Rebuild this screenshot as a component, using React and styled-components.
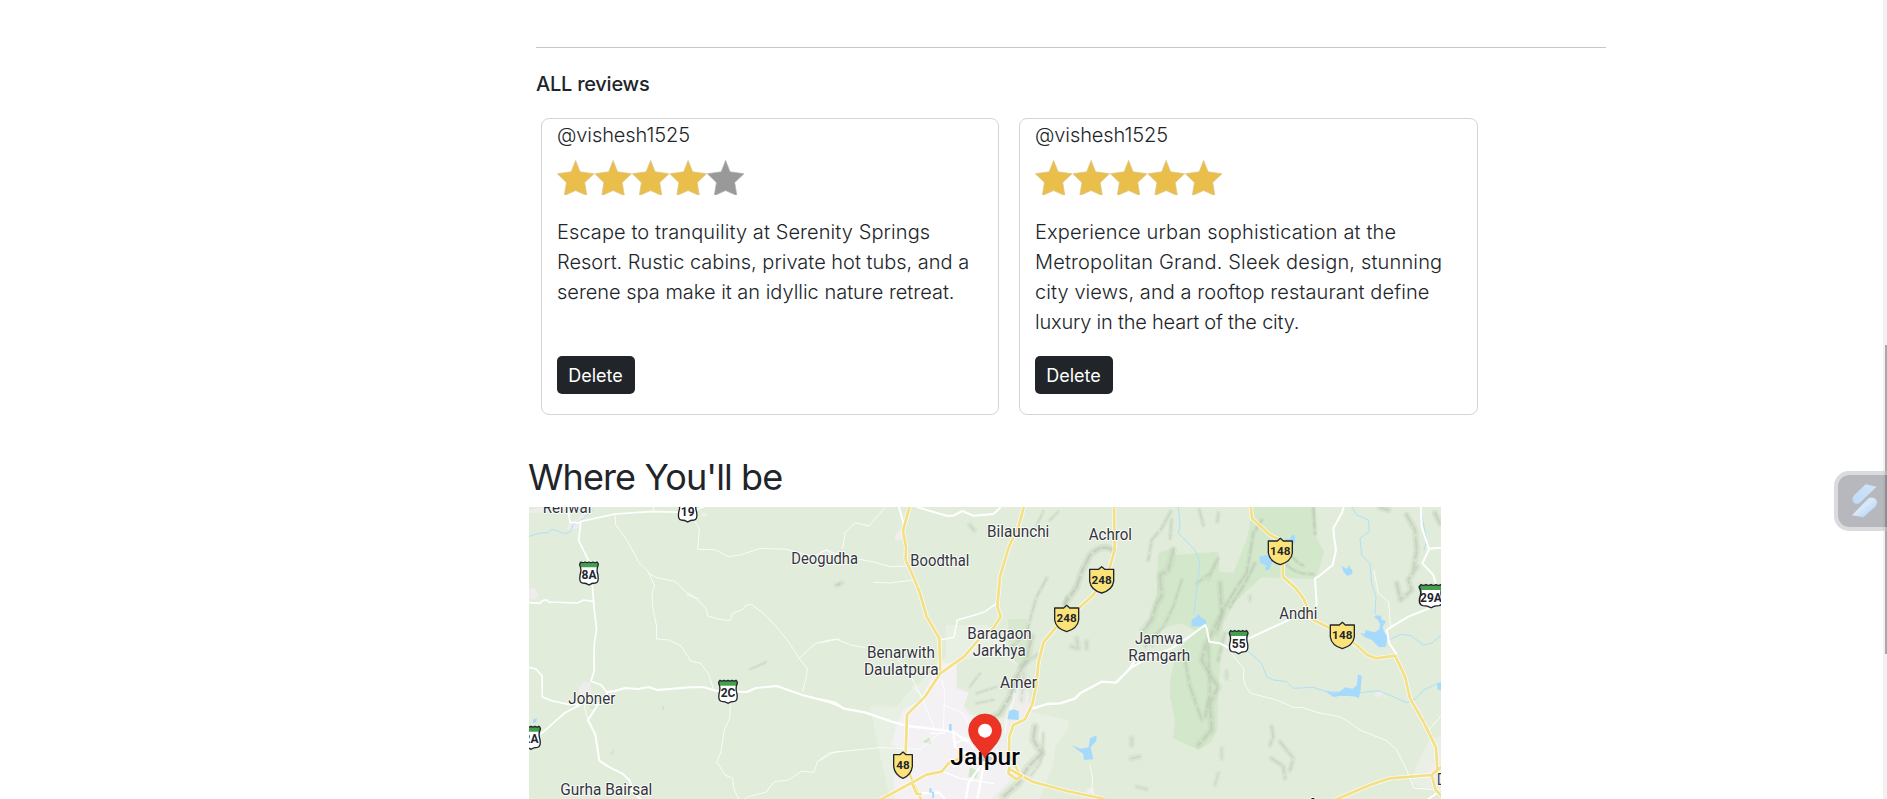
import React from 'react';
import styled, { createGlobalStyle } from 'styled-components';

const GlobalStyle = createGlobalStyle`
  *, *::before, *::after { box-sizing: border-box; }
  html, body { margin: 0; padding: 0; overflow: hidden; }
  body {
    background: #fff;
    color: #212529;
    font-family: Inter, "Open Sans", sans-serif;
    font-size: 20px;
    font-weight: 300;
    line-height: 30px;
  }
`;

const Page = styled.main`
  height: 799px;
  overflow: hidden;
  padding: 47px 0 0 529px;
`;

const Reviews = styled.section`
  width: 1077px;
  padding-left: 7px;
`;

const Divider = styled.hr`
  height: 1px;
  margin: 0 0 24px;
  border: 0;
  background: #c8c8ca;
`;

const SectionTitle = styled.h4`
  margin: 0 0 22px;
  font-size: 20px;
  font-weight: 500;
  line-height: 24px;
  letter-spacing: -0.25px;
`;

const CardRow = styled.div`
  display: grid;
  grid-template-columns: 458px 459px;
  gap: 20px;
  padding-left: 5px;
`;

const Card = styled.article`
  display: flex;
  flex-direction: column;
  align-items: flex-start;
  height: 297px;
  padding: 1px 15px 20px;
  border: 1px solid #d3d4d5;
  border-radius: 8px;
`;

const Author = styled.h5`
  margin: 0 0 7px;
  font-size: 20px;
  font-weight: 300;
  line-height: 30px;
  letter-spacing: -0.1px;
`;

const Stars = styled.svg`
  display: block;
  width: 188px;
  height: 38px;
`;

const Comment = styled.p`
  margin: 22px 0 0;
`;

const CommentLine = styled.span`
  display: block;
  white-space: nowrap;
  letter-spacing: ${(p) => p.$tracking}px;
`;

const DeleteButton = styled.button`
  width: 78px;
  height: 38px;
  margin-top: auto;
  padding: 1px 1px 0 0;
  border: 0;
  border-radius: 5px;
  background: #212529;
  color: #fff;
  font-family: inherit;
  font-size: 18px;
  font-weight: 400;
  line-height: 37px;
`;

const Location = styled.section`
  width: 912px;
  margin-top: 40px;
`;

const LocationTitle = styled.h2`
  margin: 0 0 8px -1px;
  font-size: 36px;
  font-weight: 400;
  line-height: 44px;
  letter-spacing: -0.9px;
  white-space: nowrap;
`;

const MapCanvas = styled.svg`
  display: block;
  width: 912px;
  height: 292px;
  font-family: Roboto, sans-serif;
`;

const ScrollTrack = styled.div`
  position: fixed;
  top: 0;
  right: 0;
  bottom: 0;
  width: 4px;
  background: #f1f1f1;
`;

const ScrollThumb = styled.div`
  width: 2px;
  height: 309px;
  margin: 345px 0 0 2px;
  background: #a8a8a8;
`;

const FloatingTab = styled.aside`
  position: fixed;
  top: 471px;
  right: 0;
  width: 53px;
  height: 60px;
  display: flex;
  align-items: center;
  padding-left: 14px;
  border: 4px solid rgba(190, 193, 201, 0.58);
  border-right: 0;
  border-radius: 15px 0 0 15px;
  background: rgba(112, 113, 124, 0.5);
  background-clip: padding-box;
`;

const STAR = 'M18.6 0.4 L23.1 11.8 L37 13.7 L27.7 22.6 L29.9 35.6 L18.6 30.6 L7.3 35.6 L9.4 22.6 L0.4 13.7 L14.2 11.8 Z';

function Rating({ value }) {
  return (
    <Stars viewBox="0 0 188 38" role="img" aria-label={`${value} stars`}>
      {[0, 1, 2, 3, 4].map((i) => (
        <path
          key={i}
          d={STAR}
          transform={`translate(${i * 37.5} 3)`}
          fill={i < value ? '#eabe4a' : '#999'}
          stroke={i < value ? '#d9c489' : '#b0b0b0'}
          strokeWidth="0.7"
        />
      ))}
    </Stars>
  );
}

const reviews = [
  {
    author: '@vishesh1525',
    rating: 4,
    lines: [
      ['Escape to tranquility at Serenity Springs', 0.085],
      ['Resort. Rustic cabins, private hot tubs, and a', -0.01],
      ['serene spa make it an idyllic nature retreat.', -0.01],
    ],
  },
  {
    author: '@vishesh1525',
    rating: 5,
    lines: [
      ['Experience urban sophistication at the', 0.15],
      ['Metropolitan Grand. Sleek design, stunning', 0.16],
      ['city views, and a rooftop restaurant define', 0.08],
      ['luxury in the heart of the city.', -0.22],
    ],
  },
];

function Label({ x, y, w, size = 47, weight = 400, children }) {
  return (
    <text
      x={x}
      y={y}
      textLength={w}
      lengthAdjust="spacingAndGlyphs"
      fontSize={size}
      fontWeight={weight}
      fill={weight > 400 ? '#050505' : '#33343c'}
      stroke="#fff"
      strokeOpacity="0.85"
      strokeWidth="6"
      strokeLinejoin="round"
      paintOrder="stroke"
    >
      {children}
    </text>
  );
}

const STATE = 'M-28 -25 Q-29 -30 -24 -34 Q-18 -30 -12 -34 Q-6 -30 0 -34 Q6 -30 12 -34 Q18 -30 24 -34 Q29 -30 28 -25 Q21 -12 27 6 Q30 28 19 29 Q8 29 0 35 Q-8 29 -19 29 Q-30 28 -27 6 Q-21 -12 -28 -25 Z';

function StateShield({ x, y, wide = 1, children }) {
  return (
    <g transform={`translate(${x} ${y})`}>
      <g transform={`scale(${wide} 1)`}>
        <path d={STATE} fill="#fff" />
        <path d="M-28 -25 Q-29 -30 -24 -34 Q-18 -30 -12 -34 Q-6 -30 0 -34 Q6 -30 12 -34 Q18 -30 24 -34 Q29 -30 28 -25 L25 -18 H-25 Z" fill="#45a04d" />
        <path d={STATE} fill="none" stroke="#22252e" strokeWidth="4" />
      </g>
      <text y="17" textAnchor="middle" fontSize="36" fontWeight="700" fill="#22252e">{children}</text>
    </g>
  );
}

function NationalShield({ x, y, half = 36, children }) {
  return (
    <g transform={`translate(${x} ${y})`}>
      <path
        d={`M${-half} -32 H-9 L0 -40 L9 -32 H${half} V4 Q${half - 4} 30 0 39 Q${4 - half} 30 ${-half} 4 Z`}
        fill="#fbe378"
        stroke="#22252e"
        strokeWidth="4"
        strokeLinejoin="round"
      />
      <text y="11" textAnchor="middle" fontSize="35" fontWeight="700" letterSpacing="0.5" fill="#22252e">{children}</text>
    </g>
  );
}

const Road = ({ d, w = 5, o = 1 }) => (
  <path d={d} fill="none" stroke="#fff" strokeWidth={w} strokeOpacity={o} strokeLinejoin="round" strokeLinecap="round" />
);

const Highway = ({ d }) => (
  <>
    <path d={d} fill="none" stroke="#fff" strokeOpacity="0.75" strokeWidth="13" strokeLinejoin="round" />
    <path d={d} fill="none" stroke="#f4df83" strokeWidth="8" strokeLinejoin="round" />
  </>
);

const Stream = ({ d }) => <path d={d} fill="none" stroke="#aee0f8" strokeWidth="3" strokeLinejoin="round" />;

const Ridge = ({ d, w = 12, o = 0.5 }) => (
  <g fill="none" strokeLinejoin="round" strokeLinecap="round" filter="url(#relief)">
    <path d={d} stroke="#bccab2" strokeWidth={w * 1.7} strokeOpacity={o * 0.45} />
    <path d={d} stroke="#b4c2aa" strokeWidth={w * 0.6} strokeOpacity={o * 0.75} strokeDasharray="34 9 18 14" />
  </g>
);

function WestTerrain() {
  return (
    <g transform="translate(520 440) scale(0.333333)">
      <g fill="#efecec">
        <path d="M27 210 L68 202 L72 218 L27 218 Z" />
        <path d="M142 262 L146 250 L172 240 L180 225 L205 208 L200 228 L180 252 L172 266 L142 270 Z" />
        <path d="M172 765 L178 740 L192 726 L212 728 L214 770 Z" />
        <path d="M27 444 L48 448 L54 468 L42 480 L27 474 Z" />
        <path d="M543 218 L558 218 L562 229 L545 231 Z" />
      </g>
      <g fill="#d3dec9">
        <path d="M686 686 L742 660 L738 672 L688 692 Z" />
        <path d="M270 944 L282 928 L281 940 Z" />
        <path d="M427 799 h5 v10 h-4z M210 800 h16 v5 h-16z M948 436 l12 -9 v9z" />
      </g>
      <path d="M39 839 L50 834 L49 847 L39 850 Z" fill="#a6dafd" />
      <Stream d="M27 290 Q60 275 84 279 Q92 264 112 272 Q128 284 150 277 L160 252 L188 237 L220 208" />
      <g fill="none">
        <Road w={3} o={0.8} d="M285 225 L287 254 L320 300 L348 350 L354 364 L385 395 L404 438 L396 458 L399 505 L410 560 L409 597 L445 600 L484 618 L512 663 L542 670 L566 703 L581 750 M385 400 L410 413 L465 424 L500 458 L518 466 L558 505 L563 528 L600 538 L630 542 L638 520 L670 508 L676 497 L694 493 L730 520 L768 560 L802 600 L838 655 L862 686 L860 706 L848 754 M838 655 L870 625 L888 610 L930 600 L960 597" />
        <Road w={3} o={0.8} d="M525 245 L538 266 L533 328 L585 329 L625 350 L660 345 L722 325 L800 328 L880 350 L918 329 L938 345 L960 352 M631 795 L629 835 L613 870 L602 940 L590 965 L616 1006 L637 1014 L643 1050 L658 1080 M668 1080 L685 1070 L740 1056 L752 1037 L765 1025 L806 1020 L844 994 L882 997 L892 965 L925 940 L960 934 M200 780 L193 800 L204 838 M400 200 V216 M500 465 L535 475" />
        <Road d="M180 245 L285 222 L400 214 L505 218 L552 200 M144 208 L150 247 L182 248 L176 302 L210 370 L216 420 L222 503 L230 568 L223 610 L222 660 L223 690 L213 724 L243 734 L262 758 L260 775 M27 488 L60 490 L68 481 L80 480 L85 486 L172 489 L192 480 L222 485 M27 682 L48 687 L66 708 L67 771 L98 783 L145 793 L185 793 L135 818 L64 881" />
        <Road w={6} d="M260 756 L285 753 L315 744 L355 747 L385 741 L412 750 L512 742 L552 742 L590 753 L680 756 L708 744 L770 738 L850 766 L930 787 L962 800" />
        <Road w={6} d="M236 790 L204 840 L226 884 L238 962 L270 983 L306 1000 L330 1022 L337 1055 L365 1080" />
      </g>
    </g>
  );
}

function CentreTerrain() {
  return (
    <g transform="translate(820 500) scale(0.333333)">
      <g fill="#e8efe3">
        <path d="M378 375 L500 375 L565 440 L610 480 L618 520 L625 590 L630 635 L745 660 L745 690 L705 740 L700 795 L660 897 L210 897 L175 745 L150 618 L230 620 L280 560 L330 520 L350 485 L378 475 Z" />
      </g>
      <path d="M410 480 L540 470 L600 500 L605 590 L560 650 L520 655 L455 640 L432 615 L446 578 L410 560 Z" fill="#e1ecdb" />
      <path d="M565 357 L620 357 L635 400 L618 480 L600 500 L575 470 L565 430 Z" fill="#d7e8cf" />
      <path d="M355 490 L410 490 L410 568 L446 578 L430 620 L450 645 L520 660 L545 690 L530 740 L565 790 L570 840 L515 897 L225 897 L220 830 L248 790 L250 750 L215 735 L228 680 L250 628 L300 600 L330 540 Z" fill="#f3f1f4" />
      <path d="M545 690 L560 630 L590 560 L628 580 L628 640 L590 668 L565 700 L562 770 L530 740 Z" fill="#eeeeea" />
      <path d="M225 108 L240 88 L250 96 L246 120 L226 122 Z M606 595 L625 600 L628 650 L600 655 Z M800 865 L822 865 L822 880 L800 880 Z" fill="#f1eded" />
      <path d="M308 725 L328 712 L334 730 L320 730 Z M445 830 L468 835 L475 815 L450 802 Z" fill="#cfe9c8" />
      <Ridge d="M880 150 Q845 130 810 165 L785 215 L770 260 L735 312" w={13} o={0.65} />
      <Ridge d="M680 235 L650 290 L635 340 L620 400 L575 440 M740 290 L735 312" w={8} />
      <Ridge d="M635 410 L620 480 L590 530 L570 590 L540 640 L500 665" w={14} o={0.6} />
      <Ridge d="M600 500 L650 465 M612 520 L605 600 M600 535 L560 560" w={12} o={0.35} />
      <Ridge d="M645 680 L640 720 L665 760 L625 800 L595 850 L550 890" w={15} o={0.6} />
      <Ridge d="M670 700 L668 760 L660 790 L630 830" w={9} o={0.4} />
      <Ridge d="M650 75 L670 35 M690 60 L715 35 M470 580 L530 560 M470 610 L520 600 M450 560 L480 520" w={7} o={0.4} />
      <Ridge d="M755 440 L775 445 M770 415 L775 445 M800 425 L800 445 M935 715 L935 735 M935 775 L958 770 M450 75 L462 90 M50 255 L64 250" w={12} o={0.4} />
      <Road w={3} o={0.8} d="M195 22 L160 62 L148 78 L105 68 L75 98 L68 145 M0 160 L20 150 L45 160 L120 178 L160 186 L210 200 L262 198 M160 247 L210 249 L278 240 M0 428 L50 418 L95 436 L135 442 M235 480 L262 510 L300 580 L345 690 M280 560 L310 595" />
      <Road w={4} d="M360 420 L402 412 L412 360 L465 345 L495 335 L530 310" />
      <Road w={3} d="M365 540 L374 575 L370 690 M370 614 L430 640 L460 700 M585 565 L580 605 L560 660 L555 700 M0 782 L40 757 L180 743 L240 745 L300 748 L370 690 M810 795 L818 835 L815 875 L830 897" o={0.8} />
      <Road w={6} d="M293 22 L380 47 L400 47 L427 33 L460 47 L520 42 L540 24 M235 15 L252 75" />
      <Road w={7} d="M0 598 L45 608 L72 626 L135 637 L215 665 L265 678 L400 695 L440 725 M400 695 L405 740 L450 770 M490 800 L472 897 M480 800 L445 850 L438 897 M300 880 L358 878 L375 897" />
      <Road w={4} d="M405 730 L440 715 L460 745 M400 800 L440 780 M370 815 L420 835 L520 850 M415 705 L450 720 M330 700 L375 700" />
      <Road w={7} d="M640 625 L680 612 L720 610 L765 596 L780 580 L845 545 L888 548 L930 505 L945 480" />
      <Highway d="M270 15 L249 92 L258 140 L257 180 L280 230 L300 280 L320 350 L358 415 L361 520" />
      <Highway d="M613 15 L596 78 L565 145 L540 230 L532 320 L542 350 L520 385 L475 420 L432 470 L361 520 L315 590 L261 644 L256 790 L280 850 L303 897" />
      <Highway d="M882 15 L884 150 L867 210 L820 285 L765 335 L710 380 L670 428 L655 490 L650 550 L637 612 L615 658 L580 675 L568 710 L567 760 L600 825 L640 846 L740 873 L855 897" />
      <Highway d="M180 900 L320 824 L365 815 L385 790 L435 768 M568 800 L565 820 L590 838 L606 828 L570 808 M276 850 L290 882 L305 882" />
      <g fill="#a6dafd">
        <path d="M567 633 L582 628 L596 634 L596 660 L562 658 Z M387 672 H395 V692 H387 Z" />
        <path d="M754 735 L782 746 L806 742 L810 715 L830 706 L829 722 L812 742 L820 778 L792 780 L790 762 L776 752 Z" />
        <path d="M328 865 H335 V875 H342 V895 H337 V878 H328 Z M583 565 H586 V578 H583 Z" />
      </g>
    </g>
  );
}

function EastTerrain() {
  return (
    <g transform="translate(1130 500) scale(0.333333)">
      <g fill="#d3e7cb">
        <path d="M370 20 L555 20 L560 115 L582 155 L565 215 L555 237 L395 232 L315 305 L280 370 L265 560 L262 690 L245 725 L205 750 L130 715 L135 660 L120 590 L122 530 L140 455 L200 395 L155 370 L95 385 L70 445 L25 425 L60 350 L80 280 L85 160 L135 140 L135 165 L265 155 L268 215 L310 218 L350 120 Z" />
      </g>
      <path d="M935 705 L895 725 L862 790 L845 845 L875 868 L935 870 Z" fill="#e9efe4" />
      <path d="M895 800 L912 792 L925 810 L915 825 L892 818 Z M730 585 L750 573 L763 580 L745 592 Z M763 592 l8 -4 v10z" fill="#f1eded" />
      <Ridge d="M122 35 L95 85 L65 120 L55 180 M125 60 L120 115 M208 30 L220 75 M265 40 L262 65" w={9} o={0.45} />
      <Ridge d="M130 150 L115 210 L90 225 L95 290 L80 310 L65 360 L40 390" w={14} o={0.5} />
      <Ridge d="M155 240 L130 320 L100 380 L45 440 M260 180 L240 220 L200 250 M265 175 L235 238" w={8} />
      <Ridge d="M550 22 L555 100 M395 60 L370 100 L360 160 L350 220 L315 270 L280 330 L260 400 M375 190 L345 250 L300 320" w={9} o={0.6} />
      <Ridge d="M470 195 Q500 225 550 222 M480 160 Q500 190 520 196" w={7} o={0.6} />
      <Ridge d="M270 250 L275 340 L245 400 L225 440 L215 480 L250 540 L265 560 L240 610 L245 690 L205 735" w={13} o={0.55} />
      <Ridge d="M165 480 L180 560 L205 630 L215 660 M235 440 L240 580 L225 650 M285 400 L265 480" w={10} o={0.5} />
      <Ridge d="M750 22 L775 30 M830 45 L855 90 L860 150 L850 210 M800 250 L812 300 L845 270 L835 240 L860 200 M915 40 L930 70" w={12} o={0.55} />
      <Ridge d="M425 680 L430 710 L420 735 M450 725 L470 750 L490 775 L480 810 M425 775 L460 800 L465 835" w={10} o={0.45} />
      <Ridge d="M275 745 L275 775 M265 820 L255 855 M20 860 L50 868 M290 515 L290 535 M360 290 L360 300" w={10} o={0.35} />
      <Stream d="M145 20 L150 75 L145 100 L195 150 L210 185 L202 250 L192 345 M355 455 L395 490 L410 530 L430 540 L470 545 L490 565 L550 562 L590 575 L690 578 L745 572 L790 590 L830 608 L860 595 L880 570 L925 550 M665 20 L680 45 L715 60 L718 95 L690 115 L695 165 L720 190 L725 250 L738 290 L735 340 L745 350 M775 420 L815 403 L845 408 L880 435 L905 430 L935 403 M870 20 L890 120 L882 150" />
      <g fill="#a6dafd">
        <path d="M184 358 L195 355 L205 342 L212 352 L228 360 L228 378 L185 380 Z" />
        <path d="M388 170 L412 165 L430 178 L425 190 L417 210 L405 210 L408 196 L390 188 Z M465 115 L480 118 L484 106 L495 105 L495 128 L475 138 Z" />
        <path d="M635 197 L650 207 L658 194 L661 206 L667 208 L667 222 L652 228 L640 215 Z" />
        <path d="M690 398 L705 402 L706 390 L735 397 L748 388 L750 372 L742 358 L730 350 L752 346 L756 360 L768 362 L758 382 L762 395 L772 408 L768 440 L748 442 L735 430 L725 420 L705 412 Z" />
        <path d="M583 572 L610 578 L628 576 L645 562 L668 566 L680 556 L684 523 L695 528 L692 570 L686 596 L680 590 L655 588 L625 588 L612 592 Z M922 550 L935 545 V572 L922 568 Z" />
      </g>
      <Road w={3} o={0.8} d="M305 460 L342 508 L340 530 L345 555 L362 580 L440 600 L490 622 L515 622 L560 637 L628 650 L655 665 L690 690 L770 722 L800 750 L830 810 L852 865 L935 870 M935 645 L905 680 L895 692 M732 213 L745 280 L776 305 L782 385" />
      <Road w={6} d="M0 505 L60 470 L125 445 L185 405 L225 375 L230 385 L238 425 L270 430 L295 443 M350 418 L480 358 M643 15 L635 40 L610 85 L612 110 L618 150 L608 195 L565 230 L555 235 L560 310 L555 345 M872 15 L875 80 L897 148 L877 190 L910 225 L917 250 M895 146 L935 143 M905 322 L835 350 L782 382 L770 390 L778 430 L798 460 L798 480 M920 880 L895 897" />
      <Highway d="M362 15 L366 55 L420 105 L450 120 L458 190 L459 230 L500 268 L520 295 L540 340 L545 357 L610 390 L680 435 L712 465 L738 475 L795 467 L825 530 L840 595 L880 665 L918 742 L922 808 L905 825 L780 835 L720 855 L615 900 M905 825 L917 870 L935 888 M915 818 L935 800" />
    </g>
  );
}

function LocationMap() {
  return (
    <MapCanvas viewBox="529 507 912 292" role="img" aria-label="Map of Jaipur">
      <defs>
        <filter id="relief" x="-30%" y="-30%" width="160%" height="160%" filterUnits="objectBoundingBox">
          <feGaussianBlur stdDeviation="2" />
        </filter>
      </defs>
      <rect x="529" y="507" width="912" height="292" fill="#e1ecdb" />
      <WestTerrain />
      <EastTerrain />
      <CentreTerrain />
      <g transform="translate(520 440) scale(0.333333)">
        <Label x={68} y={219} w={146}>Renwal</Label>
        <Label x={814} y={373} w={200}>Deogudha</Label>
        <Label x={145} y={791} w={141}>Jobner</Label>
        <Label x={121} y={1065} w={276}>Gurha Bairsal</Label>
        <StateShield x={503} y={211}>19</StateShield>
        <StateShield x={207} y={400}>8A</StateShield>
        <StateShield x={624} y={755}>2C</StateShield>
        <StateShield x={33} y={893}>2A</StateShield>
      </g>
      <g transform="translate(820 500) scale(0.333333)">
        <Label x={501} y={112} w={187}>Bilaunchi</Label>
        <Label x={806} y={120} w={130}>Achrol</Label>
        <Label x={271} y={199} w={177}>Boodthal</Label>
        <Label x={442} y={416} w={193}>Baragaon</Label>
        <Label x={458} y={467} w={159}>Jarkhya</Label>
        <Label x={141} y={473} w={204}>Benarwith</Label>
        <Label x={132} y={525} w={224}>Daulatpura</Label>
        <Label x={540} y={564} w={111}>Amer</Label>
        <Label x={391} y={795} w={209} size={70} weight={500}>Jaipur</Label>
        <NationalShield x={845} y={240}>248</NationalShield>
        <NationalShield x={740} y={356}>248</NationalShield>
        <NationalShield x={249} y={796} half={28}>48</NationalShield>
        <ellipse cx="495" cy="775" rx="22" ry="9" fill="#000" opacity="0.15" />
        <path d="M495 775 C482 748 446 728 446 690 A49 48 0 0 1 544 690 C544 728 508 748 495 775 Z" fill="#ec3324" stroke="#d42b1e" strokeWidth="2" />
        <circle cx="495" cy="692" r="21" fill="#fff" />
      </g>
      <g transform="translate(1130 500) scale(0.333333)">
        <Label x={448} y={357} w={114}>Andhi</Label>
        <Label x={15} y={432} w={144}>Jamwa</Label>
        <Label x={-5} y={484} w={186}>Ramgarh</Label>
        <Label x={921} y={854} w={110}>Dausa</Label>
        <Label x={528} y={929} w={130} size={52} weight={500}>Agra</Label>
        <NationalShield x={451} y={155}>148</NationalShield>
        <NationalShield x={637} y={407}>148</NationalShield>
        <StateShield x={326} y={426}>55</StateShield>
        <StateShield x={903} y={288} wide={1.25}>29A</StateShield>
      </g>
    </MapCanvas>
  );
}

function TabMark() {
  return (
    <svg width="25" height="34" viewBox="0 0 75 102" aria-hidden="true">
      <defs>
        <linearGradient id="upper" x1="1" y1="0" x2="0" y2="1">
          <stop offset="0" stopColor="#d3e4f7" />
          <stop offset="1" stopColor="#bcdcfb" />
        </linearGradient>
        <linearGradient id="lower" x1="0" y1="0" x2="1" y2="1">
          <stop offset="0.1" stopColor="#b9d9fa" />
          <stop offset="0.45" stopColor="#d9e9f9" />
          <stop offset="0.75" stopColor="#bcdaf9" />
        </linearGradient>
      </defs>
      <path d="M41 1 L74 8 L26 54 C18 62 8 61 4 53 C0 46 1 39 8 32 Z" fill="url(#upper)" />
      <path d="M34 100 L0 94 L47 45 C57 37 70 41 74 50 C77 58 73 65 68 70 Z" fill="url(#lower)" />
    </svg>
  );
}

export default function App() {
  return (
    <>
      <GlobalStyle />
      <Page>
        <Reviews>
          <Divider />
          <SectionTitle>ALL reviews</SectionTitle>
          <CardRow>
            {reviews.map((review) => (
              <Card key={review.rating}>
                <Author>{review.author}</Author>
                <Rating value={review.rating} />
                <Comment>
                  {review.lines.map(([text, tracking]) => (
                    <CommentLine key={text} $tracking={tracking}>{text}</CommentLine>
                  ))}
                </Comment>
                <DeleteButton type="button">Delete</DeleteButton>
              </Card>
            ))}
          </CardRow>
        </Reviews>
        <Location>
          <LocationTitle>Where You'll be</LocationTitle>
          <LocationMap />
        </Location>
      </Page>
      <ScrollTrack>
        <ScrollThumb />
      </ScrollTrack>
      <FloatingTab>
        <TabMark />
      </FloatingTab>
    </>
  );
}
